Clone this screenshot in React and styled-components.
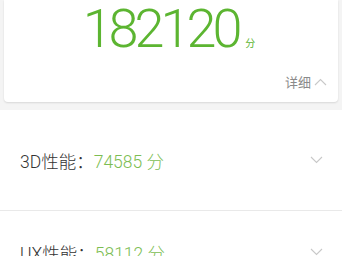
import React from "react";
import styled, { createGlobalStyle } from "styled-components";

const GlobalStyle = createGlobalStyle`
  body {
    margin: 0;
    background: #f4f4f4;
    font-family: Roboto, "Noto Sans CJK SC", sans-serif;
  }
`;

const rows = [
  { label: "3D性能：", score: 74585 },
  { label: "UX性能：", score: 58112 },
];

const Chevron = ({ up }) => (
  <svg width="13" height="8" viewBox="0 0 13 8">
    <polyline
      points={up ? "1,7 6.5,1.5 12,7" : "1,1 6.5,6.5 12,1"}
      fill="none"
      stroke="#c8c8c8"
      strokeWidth="1.1"
    />
  </svg>
);

const App = () => {
  return (
    <Page>
      <GlobalStyle />
      <Card>
        <Total>
          <Big>182120</Big>
          <Unit>分</Unit>
        </Total>
        <More>
          详细
          <Chevron up />
        </More>
      </Card>
      <List>
        {rows.map((r, i) => (
          <Row key={r.label} $last={i === rows.length - 1}>
            <Label>
              {r.label}
              <Score>{r.score} 分</Score>
            </Label>
            <Chevron />
          </Row>
        ))}
      </List>
    </Page>
  );
};

export default App;

const Page = styled.div`
  width: 342px;
  height: 256px;
  overflow: hidden;
`;

const Card = styled.div`
  margin: 0 4px;
  height: 102px;
  background: #fff;
  border-radius: 0 0 4px 4px;
  box-shadow: 0 1px 2px rgba(0, 0, 0, 0.12);
  display: flex;
  flex-direction: column;
  align-items: center;
`;

const Total = styled.div`
  display: flex;
  align-items: baseline;
  margin-top: -2px;
  margin-left: -4px;
`;

const Big = styled.span`
  font-family: Roboto, sans-serif;
  font-weight: 300;
  font-size: 54px;
  letter-spacing: -4px;
  color: #5cb531;
  line-height: 62px;
`;

const Unit = styled.span`
  font-size: 10px;
  color: #5cb531;
  margin-left: 7px;
`;

const More = styled.div`
  align-self: flex-end;
  margin: 12px 11px 0 0;
  display: flex;
  align-items: center;
  gap: 3px;
  font-size: 13px;
  color: #8a8a8a;
`;

const List = styled.div`
  margin-top: 8px;
  background: #fff;
`;

const Row = styled.div`
  height: ${(p) => (p.$last ? "82px" : "100px")};
  padding: 0 19px 0 20px;
  display: flex;
  align-items: center;
  justify-content: space-between;
  border-bottom: 1px solid #e9e9e9;
`;

const Label = styled.div`
  font-size: 17.5px;
  font-weight: 300;
  color: #333;
`;

const Score = styled.span`
  color: #7cbd52;
`;
